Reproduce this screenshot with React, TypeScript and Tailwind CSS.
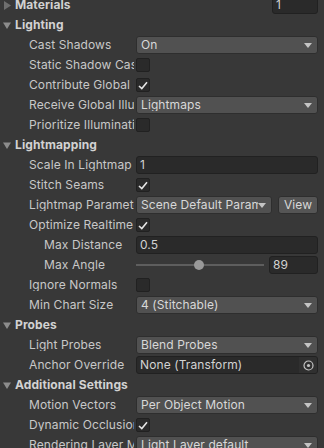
import React from 'react';

const Caret = () => (
    <svg width="8" height="5" viewBox="0 0 8 5" className="shrink-0">
        <polygon points="0,0 8,0 4,5" fill="#c4c4c4" />
    </svg>
);

const Header: React.FC<{ title: string; open?: boolean; children?: React.ReactNode }> = ({ title, open = true, children }) => (
    <div className="flex h-[20px] items-center">
        <div className="flex w-[134px] shrink-0 items-center pl-[3px]">
            <svg width="9" height="9" viewBox="0 0 9 9" className="mr-[3px] shrink-0">
                {open ? (
                    <polygon points="0,1.5 8,1.5 4,8" fill="#8c8c8c" />
                ) : (
                    <polygon points="1,0 8,4.5 1,9" fill="#6e6e6e" />
                )}
            </svg>
            <span className="whitespace-nowrap font-bold text-[#d2d2d2]">{title}</span>
        </div>
        <div className="flex flex-1 justify-end pl-[2px] pr-[6px]">{children}</div>
    </div>
);

const Row: React.FC<{ label: string; indent?: boolean; children?: React.ReactNode }> = ({ label, indent, children }) => (
    <div className="flex h-[20px] items-center">
        <div className={`w-[134px] shrink-0 overflow-hidden whitespace-nowrap text-[#c8c8c8] ${indent ? 'pl-[44px]' : 'pl-[29px]'}`}>
            {label}
        </div>
        <div className="flex min-w-0 flex-1 items-center pl-[2px] pr-[6px]">{children}</div>
    </div>
);

const Dropdown: React.FC<{ value: string; className?: string }> = ({ value, className = 'flex-1' }) => (
    <div className={`flex h-[18px] items-center justify-between rounded-[3px] border border-[#2e2e2e] bg-[#515151] pl-[4px] pr-[5px] ${className}`}>
        <span className="overflow-hidden whitespace-nowrap text-[#d8d8d8]">{value}</span>
        <Caret />
    </div>
);

const Field: React.FC<{ value: string; className?: string }> = ({ value, className = 'flex-1' }) => (
    <div className={`flex h-[18px] items-center rounded-[3px] border border-[#212121] bg-[#2a2a2a] pl-[3px] text-[#d2d2d2] ${className}`}>
        {value}
    </div>
);

const Check: React.FC<{ on?: boolean }> = ({ on }) => (
    <div className="flex h-[14px] w-[14px] items-center justify-center rounded-[2px] border border-[#212121] bg-[#2a2a2a]">
        {on && (
            <svg width="10" height="9" viewBox="0 0 10 9">
                <polyline points="1,5 3.8,7.6 9,1.2" fill="none" stroke="#e4e4e4" strokeWidth="1.6" />
            </svg>
        )}
    </div>
);

export default function App() {
    return (
        <div
            className="h-[448px] w-[324px] overflow-hidden bg-[#383838] text-[12px] leading-none tracking-[0.1px]"
            style={{ fontFamily: 'Inter, "Noto Sans", sans-serif' }}
        >
            <div className="-mt-[5px]">
                <Header title="Materials" open={false}>
                    <Field value="1" className="w-[46px]" />
                </Header>
                <Header title="Lighting" />
                <Row label="Cast Shadows"><Dropdown value="On" /></Row>
                <Row label="Static Shadow Caster"><Check /></Row>
                <Row label="Contribute Global Illumination"><Check on /></Row>
                <Row label="Receive Global Illumination"><Dropdown value="Lightmaps" /></Row>
                <Row label="Prioritize Illumination"><Check /></Row>
                <Header title="Lightmapping" />
                <Row label="Scale In Lightmap"><Field value="1" /></Row>
                <Row label="Stitch Seams"><Check on /></Row>
                <Row label="Lightmap Parameters">
                    <Dropdown value="Scene Default Parameters" className="w-[136px] shrink-0" />
                    <div className="ml-[6px] flex h-[18px] flex-1 items-center justify-center rounded-[3px] border border-[#2e2e2e] bg-[#555555] text-[#d8d8d8]">
                        View
                    </div>
                </Row>
                <Row label="Optimize Realtime UVs"><Check on /></Row>
                <Row label="Max Distance" indent><Field value="0.5" /></Row>
                <Row label="Max Angle" indent>
                    <div className="relative flex h-[18px] w-[128px] shrink-0 items-center">
                        <div className="h-[2px] w-full bg-[#5e5e5e]" />
                        <div className="absolute left-[58px] top-[4px] h-[10px] w-[10px] rounded-full bg-[#999999]" />
                    </div>
                    <Field value="89" className="ml-[5px] flex-1" />
                </Row>
                <Row label="Ignore Normals"><Check /></Row>
                <Row label="Min Chart Size"><Dropdown value="4 (Stitchable)" /></Row>
                <Header title="Probes" />
                <Row label="Light Probes"><Dropdown value="Blend Probes" /></Row>
                <Row label="Anchor Override">
                    <div className="flex h-[18px] flex-1 items-center overflow-hidden rounded-[3px] border border-[#212121] bg-[#2a2a2a]">
                        <span className="flex-1 whitespace-nowrap pl-[3px] text-[#d2d2d2]">None (Transform)</span>
                        <div className="flex h-full w-[18px] items-center justify-center bg-[#303030]">
                            <svg width="11" height="11" viewBox="0 0 11 11">
                                <circle cx="5.5" cy="5.5" r="4.5" fill="none" stroke="#c4c4c4" strokeWidth="1.2" />
                                <circle cx="5.5" cy="5.5" r="1.6" fill="#c4c4c4" />
                            </svg>
                        </div>
                    </div>
                </Row>
                <Header title="Additional Settings" />
                <Row label="Motion Vectors"><Dropdown value="Per Object Motion" /></Row>
                <Row label="Dynamic Occlusion"><Check on /></Row>
                <Row label="Rendering Layer Mask"><Dropdown value="Light Layer default" /></Row>
            </div>
        </div>
    );
}
